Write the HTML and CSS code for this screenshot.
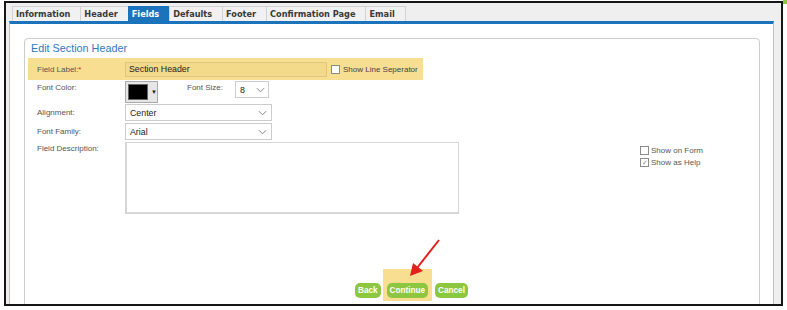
FILE: index.html
```html
<!doctype html>
<html>
    <head>
        <meta charset='utf-8'>
        <title>Edit Section Header</title>
        <link rel="stylesheet" href="styles.css">
    </head>
    <body>
        <span class='corner'></span>
        <div class='frame'>
            <ul class='tabs'>
                <li>Information</li>
                <li>Header</li>
                <li class='active'>Fields</li>
                <li>Defaults</li>
                <li>Footer</li>
                <li>Confirmation Page</li>
                <li>Email</li>
            </ul>
            <div class='panel'>
                <div class='box'>
                    <h3 class='title'>Edit Section Header</h3>
                    <div class='form'>
                        <div class='row row-label'>
                            <span class='lbl'>Field Label:<i>*</i></span>
                            <span class='input'>Section Header</span>
                            <span class='check'></span>
                            <span class='check-txt'>Show Line Seperator</span>
                        </div>
                        <div class='row row-color'>
                            <span class='lbl'>Font Color:</span>
                            <span class='picker'><b></b><em>&#9660;</em></span>
                            <span class='lbl-size'>Font Size:</span>
                            <span class='select select-size'>8<svg viewBox='0 0 10 6'><path d='M1 1l4 4 4-4' /></svg></span>
                        </div>
                        <div class='row row-select'>
                            <span class='lbl'>Alignment:</span>
                            <span class='select select-wide'>Center<svg viewBox='0 0 10 6'><path d='M1 1l4 4 4-4' /></svg></span>
                        </div>
                        <div class='row row-select'>
                            <span class='lbl'>Font Family:</span>
                            <span class='select select-wide'>Arial<svg viewBox='0 0 10 6'><path d='M1 1l4 4 4-4' /></svg></span>
                        </div>
                        <div class='row row-desc'>
                            <span class='lbl'>Field Description:</span>
                            <span class='textarea'></span>
                            <div class='opts'>
                                <div class='opt'><span class='check'></span>Show on Form</div>
                                <div class='opt'><span class='check checked'>&#10003;</span>Show as Help</div>
                            </div>
                        </div>
                    </div>
                    <div class='actions'>
                        <a href='#' class='btn'>Back</a>
                        <span class='mark'><a href='#' class='btn'>Continue</a></span>
                        <a href='#' class='btn'>Cancel</a>
                    </div>
                </div>
            </div>
        </div>
        <svg class='arrow' width='40' height='45' viewBox='0 0 40 45'>
            <line x1='34' y1='2' x2='12' y2='30' stroke='#e3201b' stroke-width='2' />
            <path d='M5 38l3-13 10 8z' fill='#e3201b' />
        </svg>
    </body>
</html>
```

FILE: styles.css
```css
html,body,ul,li,h3 {
    padding:0px;
    margin:0px;
}
ul,li {
    list-style:none;
}
a {
    text-decoration:none;
}
body {
    width:787px;
    height:310px;
    background:#fff;
    position:relative;
    overflow:hidden;
    font-family:'Liberation Sans',Arial,sans-serif;
}
.corner {
    position:absolute;
    top:0;
    right:0;
    width:4px;
    height:4px;
    background:#8dc63f;
}
.frame {
    margin:1px 0 0 4px;
    width:775px;
    height:301px;
    border:2px solid #161616;
    background:#efefef;
    overflow:hidden;
}
.tabs {
    display:flex;
    margin:3px 0 0 6px;
    height:15px;
}
.tabs li {
    height:14px;
    line-height:15px;
    padding:0 10px 0 3px;
    border:1px solid #d2d2d2;
    border-bottom:none;
    margin-right:-1px;
    background:#f1f1f1;
    font-family:'DejaVu Sans',Verdana,sans-serif;
    font-weight:bold;
    font-size:8.2px;
    color:#3a3a3a;
    white-space:nowrap;
}
.tabs li.active {
    background:#1b74bb;
    border-color:#1b74bb;
    color:#fff;
}
.panel {
    margin-left:3px;
    width:765px;
    height:290px;
    border-top:3px solid #1b74bb;
    border-left:1px solid #9ccaec;
    border-right:1px solid #9ccaec;
    background:#fff;
    padding:14px 13px 0 14px;
    box-sizing:border-box;
}
.box {
    height:300px;
    border:1px solid #cdcdcd;
    border-radius:4px;
    padding:2px 0 0 0;
}
.title {
    margin-left:6px;
    font-size:10.8px;
    line-height:15px;
    font-weight:normal;
    color:#2f7ac0;
}
.form {
    margin:2px 0 0 3px;
    font-size:8px;
    color:#555;
}
.row {
    display:flex;
    padding-left:9px;
}
.lbl {
    width:88px;
    flex:none;
}
.lbl i {
    color:#e02424;
    font-style:normal;
}
.row-label {
    width:386px;
    height:22px;
    align-items:center;
    background:#f7de90;
    white-space:nowrap;
}
.input {
    width:197px;
    height:13px;
    line-height:13px;
    padding-left:3px;
    border:1px solid #dcc680;
    background:#f3d98a;
    font-size:8.8px;
    color:#222;
    flex:none;
}
.check {
    width:7px;
    height:7px;
    border:1px solid #8a8a8a;
    background:#fff;
    margin:0 3px 0 4px;
    flex:none;
}
.check-txt {
    color:#444;
    flex:none;
}
.row-color {
    height:23px;
    margin-top:1px;
}
.row-color .lbl {
    padding-top:2px;
}
.picker {
    display:flex;
    align-items:center;
    width:31px;
    height:20px;
    border:1px solid #aaa;
    background:#e6e6e6;
}
.picker b {
    width:19px;
    height:14px;
    margin-left:2px;
    background:#000;
    border:1px solid #666;
}
.picker em {
    font-style:normal;
    font-size:6px;
    color:#222;
    margin-left:3px;
}
.lbl-size {
    width:48px;
    margin-left:29px;
    padding-top:2px;
}
.select {
    display:flex;
    align-items:center;
    justify-content:space-between;
    height:15px;
    padding:0 4px 0 4px;
    border:1px solid #ccc;
    background:#fff;
    font-size:8.8px;
    color:#222;
}
.select svg {
    width:9px;
    height:6px;
    fill:none;
    stroke:#777;
    stroke-width:1;
}
.select-size {
    width:25px;
    padding-right:3px;
}
.select-size svg {
    margin-left:3px;
}
.select-wide {
    width:137px;
}
.row-select {
    height:19px;
    align-items:center;
}
.row-select:nth-child(3) {
    margin-top:-1px;
}
.row-desc {
    margin-top:1px;
}
.row-desc .lbl {
    padding-top:2px;
}
.textarea {
    width:331px;
    height:69px;
    border:1px solid #d6d6d6;
    border-width:1px 1px 2px 2px;
    background:#fff;
}
.opts {
    margin:2px 0 0 181px;
    color:#555;
}
.opt {
    display:flex;
    align-items:center;
    height:12px;
}
.opt .check {
    margin:0 2px 0 0;
}
.check.checked {
    font-size:7px;
    line-height:7px;
    color:#888;
    text-align:center;
}
.actions {
    display:flex;
    align-items:flex-end;
    margin:55px 0 0 330px;
}
.btn {
    display:block;
    height:15px;
    line-height:15px;
    padding:0 3px;
    border-radius:5px;
    background:#8dc63f;
    color:#fff;
    font-weight:bold;
    font-size:8.2px;
}
.actions > .btn {
    margin-bottom:3px;
}
.mark {
    display:flex;
    margin:0 3px 0 2px;
    padding:14px 4px 3px 4px;
    background:#f7de90;
}
.arrow {
    position:absolute;
    left:405px;
    top:238px;
}
```
